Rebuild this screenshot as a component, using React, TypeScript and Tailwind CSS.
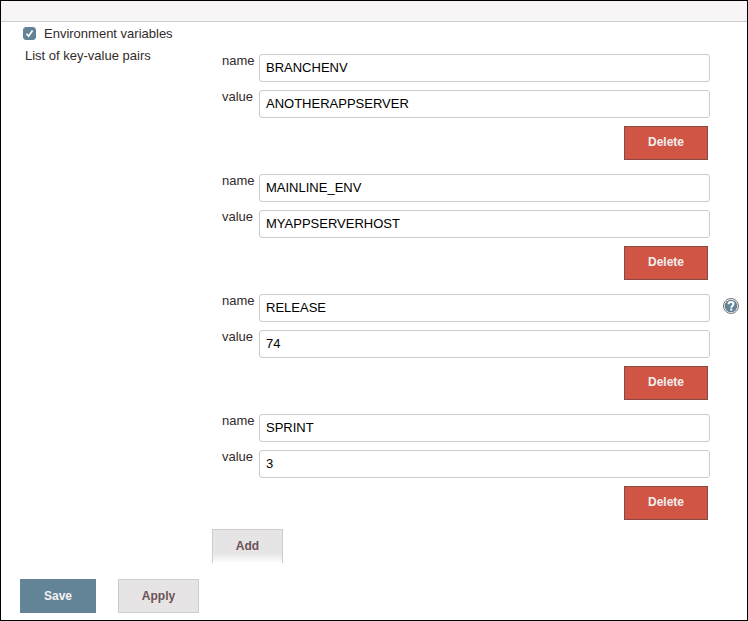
import { useState } from "react";

type Pair = { name: string; value: string };

const initialPairs: Pair[] = [
  { name: "BRANCHENV", value: "ANOTHERAPPSERVER" },
  { name: "MAINLINE_ENV", value: "MYAPPSERVERHOST" },
  { name: "RELEASE", value: "74" },
  { name: "SPRINT", value: "3" },
];

const buttonClass = "h-[34px] border text-[12px] leading-4 font-bold";

function Field({ id, label, value, onChange }: { id: string; label: string; value: string; onChange: (v: string) => void }) {
  return (
    <div className="flex items-start">
      <label htmlFor={id} className="w-[37px] shrink-0 leading-[14px]">
        {label}
      </label>
      <input
        id={id}
        type="text"
        value={value}
        onChange={(e) => onChange(e.target.value)}
        className="h-7 min-w-0 flex-1 rounded-[3px] border border-[#cccccc] bg-white px-[6px] pb-px text-black"
      />
    </div>
  );
}

function HelpIcon() {
  return (
    <svg viewBox="0 0 16 16" className="size-4" aria-hidden="true">
      <circle cx="8" cy="8" r="7.5" fill="#fff" stroke="#7b7173" />
      <circle cx="8" cy="8" r="6.3" fill="#628496" />
      <path d="M5.500 6.300C5.500 4.600 6.600 3.900 8 3.900s2.500.8 2.500 2.200C10.500 7.700 8.300 7.700 8.300 9.700" fill="none" stroke="#fff" strokeWidth="2" />
      <rect x="7.300" y="10.600" width="2" height="2" fill="#fff" />
    </svg>
  );
}

export default function App() {
  const [pairs, setPairs] = useState(initialPairs);
  const [enabled, setEnabled] = useState(true);
  const update = (i: number, patch: Partial<Pair>) =>
    setPairs(pairs.map((p, j) => (j === i ? { ...p, ...patch } : p)));

  return (
    <div className="min-h-screen border border-black bg-white font-['Liberation_Sans',Arial,sans-serif] text-[13px] text-[#332b2b]">
      <div className="h-[21px] border-b border-[#cccccc] bg-[#f8f5f6]" />
      <form onSubmit={(e) => e.preventDefault()}>
        <div className="flex h-[27px] items-center pb-1 pl-[22px]">
          <label className="flex items-center gap-2 leading-4">
            <span className="relative flex size-[13px]">
              <input
                type="checkbox"
                checked={enabled}
                onChange={(e) => setEnabled(e.target.checked)}
                className="peer size-[13px] appearance-none rounded-[3px] border border-[#628496] bg-white checked:bg-[#628496]"
              />
              <svg viewBox="0 0 13 13" className="pointer-events-none absolute inset-0 hidden size-[13px] peer-checked:block" aria-hidden="true">
                <path d="M3.500 6.800 5.600 9.200 9.500 3.500" fill="none" stroke="#fff" strokeWidth="1.700" />
              </svg>
            </span>
            Environment variables
          </label>
        </div>

        <div className="flex pr-2">
          <div className="w-[211px] shrink-0 pl-6 leading-[14px]">List of key-value pairs</div>
          <div className="min-w-0 flex-1 pt-[5px]">
            <div className="flex flex-col gap-[14px] pb-[9px] pl-[10px]">
              {pairs.map((pair, i) => (
                <div key={i} className="flex flex-col gap-2">
                  <Field id={`name-${i}`} label="name" value={pair.name} onChange={(name) => update(i, { name })} />
                  <Field id={`value-${i}`} label="value" value={pair.value} onChange={(value) => update(i, { value })} />
                  <button
                    type="button"
                    onClick={() => setPairs(pairs.filter((_, j) => j !== i))}
                    className={`${buttonClass} mr-0.5 w-[84px] self-end border-[#8a4a44] bg-[#d05545] pb-0.5 text-[#f4eeee]`}
                  >
                    Delete
                  </button>
                </div>
              ))}
            </div>
            <button
              type="button"
              onClick={() => setPairs([...pairs, { name: "", value: "" }])}
              className={`${buttonClass} w-[71px] border-b-0 border-[#cccccc] bg-linear-to-b from-[#e6e4e4] from-70% to-white pb-0.5 text-[#6b5355]`}
            >
              Add
            </button>
          </div>
          <button type="button" aria-label="Help" className="ml-[13px] size-4 self-center">
            <HelpIcon />
          </button>
        </div>

        <div className="flex gap-[22px] pt-4 pb-[7px] pl-[19px]">
          <button type="submit" className={`${buttonClass} w-[76px] border-[#628496] bg-[#628496] text-[#f4f2f2]`}>
            Save
          </button>
          <button type="button" className={`${buttonClass} w-[81px] border-[#cccccc] bg-[#e6e4e4] text-[#6b5355]`}>
            Apply
          </button>
        </div>
      </form>
    </div>
  );
}
